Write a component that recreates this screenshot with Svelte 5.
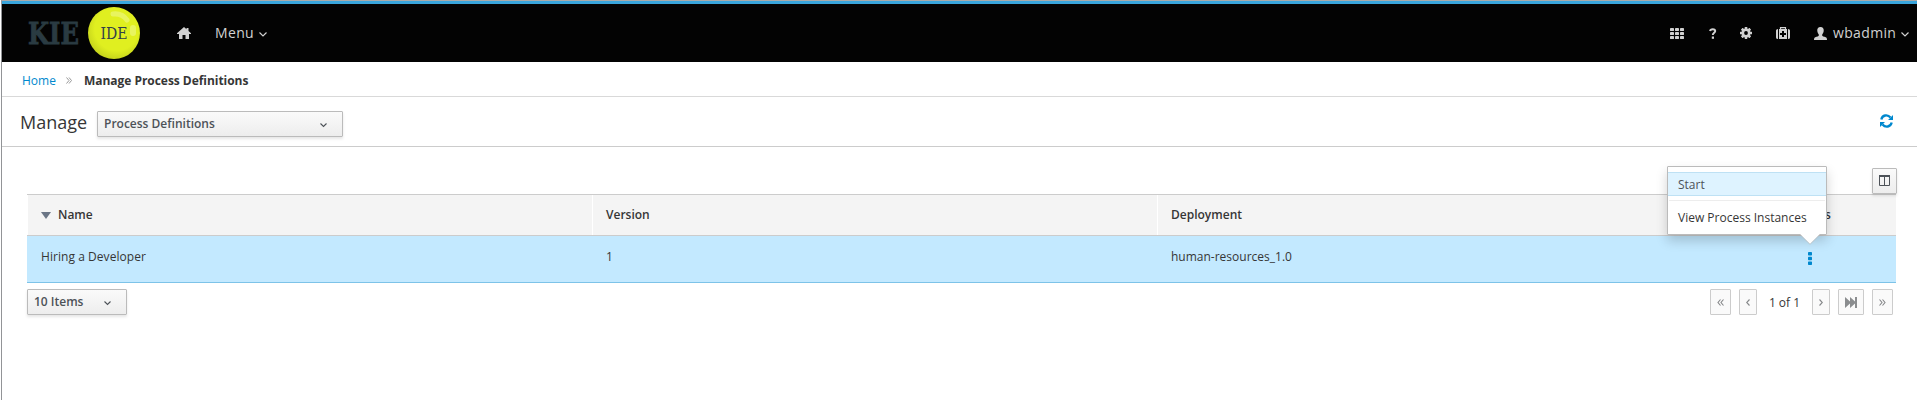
<script>
  const columns = ['Name', 'Version', 'Deployment', 'Actions'];
  const row = { name: 'Hiring a Developer', version: '1', deployment: 'human-resources_1.0' };
  const cells = [0, 5, 10];
</script>

<div class="shell">
  <header>
    <svg class="logo" width="122" height="58" viewBox="0 0 122 58">
      <defs>
        <radialGradient id="ball" cx="55%" cy="42%" r="60%">
          <stop offset="0.7" stop-color="#e0ef20" />
          <stop offset="1" stop-color="#c5d31b" />
        </radialGradient>
      </defs>
      <text class="kie" x="8" y="39.500" textLength="51" lengthAdjust="spacingAndGlyphs">KIE</text>
      <circle cx="94" cy="29" r="26" fill="url(#ball)" />
      <path d="M93 10Q102 9 107 16" fill="none" stroke="#e8f45f" stroke-width="5" stroke-linecap="round" />
      <path d="M113 24V29" stroke="#e8f45f" stroke-width="6" stroke-linecap="round" />
      <text class="ide" x="80.500" y="35" textLength="27" lengthAdjust="spacingAndGlyphs">IDE</text>
    </svg>
    <nav>
      <svg class="home" width="14" height="12" viewBox="0 0 14 12"><path d="M7 0L9.500 2.200V1H11.500V4L14 6.200V7H12V12H8.500V8H5.500V12H2V7H0V6.200Z" fill="#d1d1d1" /></svg>
      <span class="menu">Menu</span>
      <svg class="chev" width="8" height="5" viewBox="0 0 8 5"><path d="M.5.5L4 4L7.500.5" /></svg>
    </nav>
    <div class="tools">
      <svg class="apps" width="14" height="11" viewBox="0 0 14 11" fill="#d1d1d1">
        {#each [0, 4, 8] as y}{#each cells as x}<rect {x} {y} width="4" height="3" rx=".4" />{/each}{/each}
      </svg>
      <svg class="help" width="8" height="11" viewBox="0 0 8 11"><path d="M1 3C1.500 .8 6.200.5 6.200 3C6.200 4.700 3.800 4.700 3.800 7" fill="none" stroke="#d1d1d1" stroke-width="2" /><rect x="2.800" y="8.500" width="2.200" height="2.300" fill="#d1d1d1" /></svg>
      <svg class="gear" width="12" height="12" viewBox="-6 -6 12 12">
        <g fill="#d1d1d1">{#each [0, 45, 90, 135] as angle}<rect x="-1.300" y="-6" width="2.600" height="12" rx=".4" transform="rotate({angle})" />{/each}<circle r="4.500" /></g><circle r="1.900" fill="#000" />
      </svg>
      <svg class="kit" width="14" height="12" viewBox="0 0 14 12">
        <path d="M4.500 2V.7H9.500V2" fill="none" stroke="#d1d1d1" stroke-width="1.200" /><path d="M3 2H11V12H3ZM2 2V12Q0 12 0 10.500V3.500Q0 2 2 2ZM12 2Q14 2 14 3.500V10.500Q14 12 12 12Z" fill="#d1d1d1" /><path d="M7 4V10M4 7H10" stroke="#000" stroke-width="2" />
      </svg>
      <svg class="user" width="13" height="13" viewBox="0 0 13 13"><path d="M6.500 0C9 0 10 1.800 9.700 4C9.500 6 8.500 6.800 8.200 7.500C8 9 8.500 9.200 10.500 9.800C12.500 10.300 13 11 13 13H0C0 11 .5 10.300 2.500 9.800C4.500 9.200 5 9 4.800 7.500C4.500 6.800 3.500 6 3.300 4C3 1.800 4 0 6.500 0Z" fill="#d1d1d1" /></svg>
      <span class="account">wbadmin</span>
      <svg class="chev" width="8" height="5" viewBox="0 0 8 5"><path d="M.5.5L4 4L7.500.5" /></svg>
    </div>
  </header>

  <div class="crumbs">
    <a href="#home">Home</a>
    <svg width="6" height="7" viewBox="0 0 6 7"><path d="M.5.5L3 3.500L.5 6.500M3 .5L5.500 3.500L3 6.500" fill="none" stroke="#999" /></svg>
    <strong>Manage Process Definitions</strong>
  </div>

  <div class="title">
    <h1>Manage</h1>
    <button class="select wide"><span>Process Definitions</span><svg width="7" height="5" viewBox="0 0 7 5"><path d="M.5.5L3.500 3.500L6.500.5" /></svg></button>
    <svg class="refresh" width="13" height="14" viewBox="0 0 13 14">
      <path d="M1.300 5.500C2.300 1 7.500 0 10.500 3.500M11.700 8.500C10.700 13 5.500 14 2.500 10.500" fill="none" stroke="#0088ce" stroke-width="2.300" /><path d="M13 1V6H8ZM0 13V8H5Z" fill="#0088ce" />
    </svg>
  </div>

  <main>
    <div class="toolbar">
      <button class="picker" aria-label="Columns"><svg width="12" height="12" viewBox="0 0 12 12"><path d="M.5 1.500H10.500V10.500H.5ZM5.500 1.500V10.500" fill="none" stroke="#4d5258" /><path d="M0 1H11" stroke="#4d5258" stroke-width="2" /></svg></button>
    </div>
    <div class="grid head">
      {#each columns as column, i}
        <div class:center={i === 3}>{#if i === 0}<svg width="10" height="7" viewBox="0 0 10 7"><path d="M0 0H10L5 7Z" fill="#6b7686" /></svg>{/if}{column}</div>
      {/each}
    </div>
    <div class="grid record">
      <div class="name">{row.name}</div>
      <div>{row.version}</div>
      <div>{row.deployment}</div>
      <div class="center actions">
        <svg class="kebab" width="4" height="13" viewBox="0 0 4 13" fill="#0088ce"><rect width="4" height="3.500" rx=".7" /><rect y="4.700" width="4" height="3.500" rx=".7" /><rect y="9.400" width="4" height="3.500" rx=".7" /></svg>
        <div class="popup">
          <div class="item active">Start</div>
          <div class="rule"></div>
          <div class="item">View Process Instances</div>
          <svg class="arrow" width="20" height="11" viewBox="0 0 20 11"><path d="M0 0H20L10 10Z" fill="#fff" /><path d="M0 .5L10 10.300L20 .5" fill="none" stroke="#bbb" stroke-width=".7" /></svg>
        </div>
      </div>
    </div>
    <footer>
      <button class="select items"><span>10 Items</span><svg width="7" height="5" viewBox="0 0 7 5"><path d="M.5.5L3.500 3.500L6.500.5" /></svg></button>
      <div class="pager">
        <button class="w21" aria-label="First"><svg width="7" height="7" viewBox="0 0 7 7"><path d="M3.500.5L1 3.500L3.500 6.500M6.500.5L4 3.500L6.500 6.500" /></svg></button>
        <button class="w18 gap8" aria-label="Previous"><svg width="4" height="7" viewBox="0 0 4 7"><path d="M3.500.5L.7 3.500L3.500 6.500" /></svg></button>
        <span>1 of 1</span>
        <button class="w18" aria-label="Next"><svg width="4" height="7" viewBox="0 0 4 7"><path d="M.5.5L3.300 3.500L.5 6.500" /></svg></button>
        <button class="w26 gap8" aria-label="Forward"><svg width="12" height="11" viewBox="0 0 12 11"><path d="M0 0L5 4.500V0L10 4.500V0H12V11H10V6.500L5 11V6.500L0 11Z" class="solid" /></svg></button>
        <button class="w21 gap8" aria-label="Last"><svg width="7" height="7" viewBox="0 0 7 7"><path d="M.5.5L3 3.500L.5 6.500M3.500.5L6 3.500L3.500 6.500" /></svg></button>
      </div>
    </footer>
  </main>
</div>

<style>
  :global(body) { background: #fff; overflow: hidden; }
  * { box-sizing: border-box; }
  svg { display: block; flex: none; }
  button { display: flex; align-items: center; margin: 0; font: inherit; border: 1px solid #bbb; border-radius: 1px; }
  .shell { height: 400px; margin-left: 1px; border-left: 1px solid #929497; border-top: 1px solid #aaa; font: 12px/20px "Open Sans", sans-serif; color: #363636; }
  header { height: 61px; border-top: 3px solid #39a5dc; background: #030303; display: flex; align-items: flex-start; color: #d1d1d1; }
  .logo { margin-left: 18px; }
  .kie { font: bold 29px "DejaVu Serif", serif; fill: #2a3b42; stroke: #2a3b42; stroke-width: .8; }
  .ide { font: 16.500px "DejaVu Serif", serif; fill: #32404a; }
  nav, .tools { display: flex; align-items: center; height: 58px; }
  .home { margin-left: 35px; }
  .menu { font-size: 14px; letter-spacing: .35px; margin-left: 24px; width: 44px; }
  .chev path { fill: none; stroke: #d1d1d1; stroke-width: 1.200; }
  .chev { position: relative; top: 1px; }
  .tools { margin-left: auto; padding-right: 8px; }
  .help { margin-left: 25px; }
  .gear { margin-left: 23px; }
  .kit { margin-left: 24px; }
  .user { margin-left: 24px; }
  .account { margin-left: 6px; width: 68px; font-size: 14px; letter-spacing: .35px; white-space: nowrap; }
  .crumbs { height: 35px; border-bottom: 1px solid #d9d9d9; padding: 3px 0 0 20px; display: flex; align-items: center; }
  .crumbs a { color: #0088ce; text-decoration: none; width: 44px; }
  .crumbs strong { margin-left: 12px; font-weight: 700; letter-spacing: -.04px; }
  .title { height: 50px; border-bottom: 1px solid #ccc; display: flex; align-items: center; padding: 0 23px 0 18px; }
  h1 { font-size: 18px; line-height: 24px; font-weight: 400; margin: 0; width: 77px; }
  .select { height: 26px; width: 100px; padding: 1px 15px 0 6px; justify-content: space-between; font-weight: 600; color: #4d5258; background: linear-gradient(#fafafa, #ededed); box-shadow: 0 2px 3px rgba(3,3,3,.1); }
  .select svg { margin-top: 2px; }
  .items { padding-top: 0; padding-bottom: 1px; }
  .items svg { margin-top: 3px; }
  .wide { width: 246px; margin-top: 4px; }
  .select path { fill: none; stroke: #4d5258; stroke-width: 1.100; }
  .refresh { margin-left: auto; margin-right: 1px; margin-bottom: 2px; }
  main { padding: 0 21px 0 25px; }
  .toolbar { height: 47px; padding-top: 21px; display: flex; justify-content: flex-end; }
  .picker { width: 25px; height: 26px; padding: 0; margin-right: -1px; justify-content: center; background: linear-gradient(#fafafa, #ededed); z-index: 1; box-shadow: 0 2px 3px rgba(3,3,3,.1); }
  .grid { display: grid; grid-template-columns: 565px 565px 565px 1fr; }
  .head { height: 42px; border-top: 1px solid #ccc; border-bottom: 1px solid #ccc; background: #f4f4f4; font-weight: 600; }
  .head > div { display: flex; align-items: center; padding-left: 13px; border-left: 1px solid #fff; }
  .head svg { margin-right: 7px; }
  .record { height: 47px; background: #c3e9ff; border-bottom: 1px solid #7dc3e8; }
  .record > div { padding: 11px 0 0 14px; }
  .name { letter-spacing: .05px; }
  .grid > .center { justify-content: center; padding-left: 0; }
  .actions { position: relative; }
  .kebab { margin: 5px auto 0; position: relative; left: 1px; }
  .popup { position: absolute; left: -55px; top: -70px; width: 160px; height: 69px; padding: 5px 0; background: #fff; border: 1px solid #bbb; border-radius: 1px; box-shadow: 0 6px 12px rgba(3,3,3,.175); }
  .item { height: 24px; padding: 2px 10px 0; border: solid transparent; border-width: 1px 0; white-space: nowrap; }
  .active { background: #def3ff; border-color: #bee1f4; color: #4d5258; }
  .rule { height: 1px; background: #ededed; margin: 4px 1px; }
  .arrow { position: absolute; left: 132px; top: 67px; }
  footer { display: flex; justify-content: space-between; padding-top: 6px; }
  .pager { display: flex; align-items: center; padding-right: 3px; }
  .pager button { height: 26px; padding: 0; justify-content: center; border-color: #ccc; background: #fafafa; }
  .pager path { fill: none; stroke: #858789; stroke-width: 1.100; }
  .pager .solid { fill: #8b8d8f; stroke: none; }
  .pager span { width: 55px; text-align: center; padding-top: 1px; }
  .w18 { width: 18px; }
  .w21 { width: 21px; }
  .w26 { width: 26px; }
  .gap8 { margin-left: 8px; }
</style>
